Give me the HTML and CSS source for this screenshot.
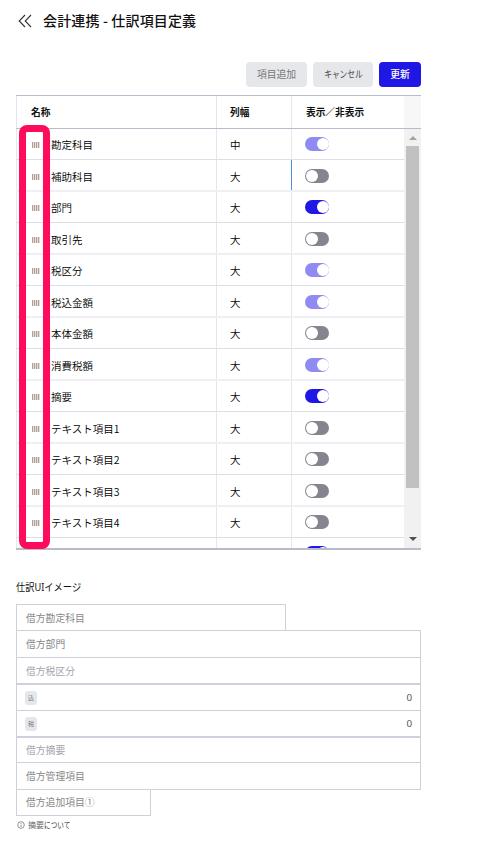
FILE: index.html
```html
<!DOCTYPE html>
<html lang="ja">
<head>
    <meta charset="UTF-8">
    <meta name="viewport" content="width=device-width, initial-scale=1.0">
    <title>会計連携 - 仕訳項目定義</title>
    <link rel="stylesheet" href="styles.css">
</head>
<body>
    <header class="page-header">
        <svg class="back-icon" width="14" height="14" viewBox="0 0 14 14"><path d="M7 1 L1.2 7 L7 13 M13 1 L7.2 7 L13 13"/></svg>
        <h1>会計連携 - 仕訳項目定義</h1>
    </header>

    <main>
        <div class="actions">
            <button class="btn btn-add">項目追加</button>
            <button class="btn btn-cancel"><span>キャンセル</span></button>
            <button class="btn btn-primary">更新</button>
        </div>

        <!-- Item table -->
        <div class="table">
            <div class="table-head">
                <div class="cell">名称</div>
                <div class="cell">列幅</div>
                <div class="cell">表示／非表示</div>
                <div class="head-gap"></div>
            </div>
            <div class="table-body">
                <div class="rows" id="rows"></div>
                <div class="scrollbar">
                    <span class="arrow arrow-up"></span>
                    <span class="thumb"></span>
                    <span class="arrow arrow-down"></span>
                </div>
            </div>
            <div class="highlight"></div>
        </div>

        <!-- Journal preview -->
        <h2><span>仕訳UIイメージ</span></h2>
        <div class="preview">
            <div class="field field-account">借方勘定科目</div>
            <div class="field">借方部門</div>
            <div class="field light">借方税区分</div>
            <div class="field amount thick"><span class="tag">込</span><span>0</span></div>
            <div class="field amount"><span class="tag">税</span><span>0</span></div>
            <div class="field light thick">借方摘要</div>
            <div class="field field-manage">借方管理項目</div>
            <div class="field field-extra">借方追加項目①</div>
        </div>
        <p class="note">
            <svg width="8" height="8" viewBox="0 0 8 8"><circle cx="4" cy="4" r="3.3"/><path d="M4 2 V2.8 M4 3.5 V6"/></svg>
            <span class="note-word">摘要</span><span class="note-rest">について</span>
        </p>
    </main>

    <script>
        const items = [
            ['勘定科目', '中', 'locked'],
            ['補助科目', '大', 'off'],
            ['部門', '大', 'on'],
            ['取引先', '大', 'off'],
            ['税区分', '大', 'locked'],
            ['税込金額', '大', 'locked'],
            ['本体金額', '大', 'off'],
            ['消費税額', '大', 'locked'],
            ['摘要', '大', 'on'],
            ['テキスト項目1', '大', 'off'],
            ['テキスト項目2', '大', 'off'],
            ['テキスト項目3', '大', 'off'],
            ['テキスト項目4', '大', 'off'],
            ['', '', 'on']
        ];

        document.getElementById('rows').innerHTML = items.map(([name, width, state]) => `
            <div class="row">
                <div class="cell name"><span class="grip"></span><span>${name}</span></div>
                <div class="cell">${width}</div>
                <div class="cell"><span class="toggle ${state}"></span></div>
            </div>`).join('');
    </script>
</body>
</html>
```
FILE: styles.css
```css
* {
    box-sizing: border-box;
}
body {
    margin: 0;
    height: 854px;
    overflow: hidden;
    background-color: #fff;
    color: #111;
    font-family: "Noto Sans", "Noto Sans CJK JP", sans-serif;
    font-size: 10.5px;
}
.page-header {
    display: flex;
    align-items: center;
    height: 42px;
    padding-left: 18px;
}
.back-icon {
    fill: none;
    stroke: #333;
    stroke-width: 1.1;
}
h1 {
    margin: -2px 0 0 11px;
    font-size: 14px;
    font-weight: 500;
    line-height: 20px;
    letter-spacing: 0.15px;
    white-space: nowrap;
    font-family: "Noto Sans CJK JP", sans-serif;
}
main {
    width: 405px;
    margin-left: 16px;
    padding-top: 20px;
}
.actions {
    display: flex;
    justify-content: flex-end;
    gap: 6px;
    height: 25px;
    margin-bottom: 8px;
}
.btn {
    width: 61px;
    padding: 0 0 1px;
    border: 0;
    border-radius: 4px;
    background-color: #e5e7eb;
    color: #777;
    font-family: "Noto Sans CJK JP", sans-serif;
    font-size: 9.8px;
    white-space: nowrap;
}
.btn-cancel {
    width: 60px;
    color: #444;
}
.btn-cancel span {
    display: inline-block;
    margin: 0 -10px;
    transform: scaleX(0.79);
}
.btn-primary {
    width: 42px;
    background-color: #1f17e3;
    color: #fff;
    font-weight: 500;
}

/* Table */
.table {
    position: relative;
    height: 455px;
    border-top: 1px solid #b8bcc8;
    border-bottom: 2px solid #b8bcc8;
}
.table-head {
    display: grid;
    grid-template-columns: 200px 75px 113px 17px;
    height: 33px;
    border-bottom: 1px solid #b8bcc8;
    font-size: 9.7px;
    font-weight: 700;
}
.cell {
    display: flex;
    align-items: center;
    padding-left: 14px;
    border-left: 1px solid #e5e7eb;
    white-space: nowrap;
}
.table-head .cell:nth-child(2) {
    padding-left: 13px;
}
.head-gap {
    background-color: #f7f7f7;
}
.table-body {
    display: flex;
    height: 419px;
    overflow: hidden;
}
.rows {
    width: 388px;
}
.row {
    display: grid;
    grid-template-columns: 200px 75px 113px;
    height: 31px;
    border-bottom: 1px solid #dddfe8;
    font-family: "Noto Sans CJK JP", sans-serif;
    font-weight: 350;
    color: #000;
}
.row:nth-child(even) {
    height: 32px;
    border-bottom: 2px solid #efeff4;
}
.row .cell:nth-child(2) {
    padding-left: 13px;
}
.row:nth-child(even) .cell:nth-child(2) {
    padding-top: 2px;
}
.row .cell:nth-child(3) {
    padding-left: 13px;
}
.row:nth-child(even) .cell:nth-child(3) {
    padding-top: 1px;
}
.row:last-child .cell:nth-child(3) {
    padding: 0 0 1px 13px;
}
.row:nth-child(2) .cell:nth-child(3) {
    border-left-color: #4a90d9;
}
.row .name {
    padding-left: 15px;
}
.row:nth-child(even) .name {
    padding-top: 2px;
}
.grip {
    width: 8px;
    height: 6px;
    margin: 1px 11px 0 0;
    background: repeating-linear-gradient(90deg, #aaa0ad 0 1px, #f0ddc5 1px 2px);
}
.toggle {
    width: 24px;
    height: 14px;
    padding: 1px 0 1px 1px;
    border-radius: 7px;
    background-color: #84858f;
}
.toggle::before {
    content: "";
    display: block;
    width: 12px;
    height: 12px;
    border-radius: 50%;
    background-color: #fff;
}
.toggle.on {
    background-color: #1f17e3;
}
.toggle.locked {
    background-color: #8f8bf1;
}
.toggle.on::before,
.toggle.locked::before {
    margin-left: 11px;
}
.scrollbar {
    display: flex;
    flex-direction: column;
    align-items: center;
    width: 17px;
    background-color: #f1f1f1;
}
.arrow {
    border: 4px solid transparent;
}
.arrow-up {
    margin-top: 3px;
    border-bottom-color: #a3a3a3;
}
.thumb {
    width: 13px;
    height: 342px;
    margin-top: 6px;
    background-color: #c1c1c1;
}
.arrow-down {
    margin-top: 49px;
    border-top-color: #505050;
}
.highlight {
    position: absolute;
    left: 3px;
    top: 29px;
    width: 31px;
    height: 424px;
    border: 7px solid #ff0b5c;
    border-radius: 8px;
}

/* Preview */
h2 {
    height: 20px;
    margin: 27px 0 7px;
    font-size: 10.5px;
    font-weight: 400;
    line-height: 20px;
}
h2 span {
    display: inline-block;
    transform: scaleX(0.88);
    transform-origin: left;
}
.preview {
    color: #888;
    font-size: 9.8px;
}
.field {
    display: flex;
    align-items: center;
    height: 27px;
    padding: 0 9px;
    border: 1px solid #cfd1da;
    border-bottom: 0;
}
.field-account {
    width: 270px;
    height: 26px;
    padding-top: 1px;
}
.field.light {
    height: 26px;
    padding-top: 1px;
    color: #a4a4ac;
}
.field.thick {
    border-top-width: 2px;
}
.field.light.thick {
    padding: 0 9px 1px;
}
.amount {
    justify-content: space-between;
    height: 26px;
    padding: 0 8px;
    color: #555;
}
.amount.thick {
    height: 27px;
}
.tag {
    width: 12px;
    height: 14px;
    border-radius: 3px;
    background-color: #e5e7eb;
    color: #777;
    font-size: 6px;
    line-height: 14px;
    text-align: center;
}
.field-manage {
    border-bottom: 1px solid #cfd1da;
    height: 28px;
}
.field-extra {
    width: 135px;
    height: 26px;
    padding-bottom: 1px;
    border-top: 0;
    border-bottom: 1px solid #cfd1da;
}
.note {
    display: flex;
    align-items: center;
    height: 12px;
    margin: 3px 0 0 1px;
    color: #666;
    font-size: 8px;
    line-height: 12px;
}
.note svg {
    margin-right: 3px;
    fill: none;
    stroke: #777;
    stroke-width: 0.8;
}
.note-rest {
    color: #333;
    transform: scaleX(0.83);
    transform-origin: left;
}
```
